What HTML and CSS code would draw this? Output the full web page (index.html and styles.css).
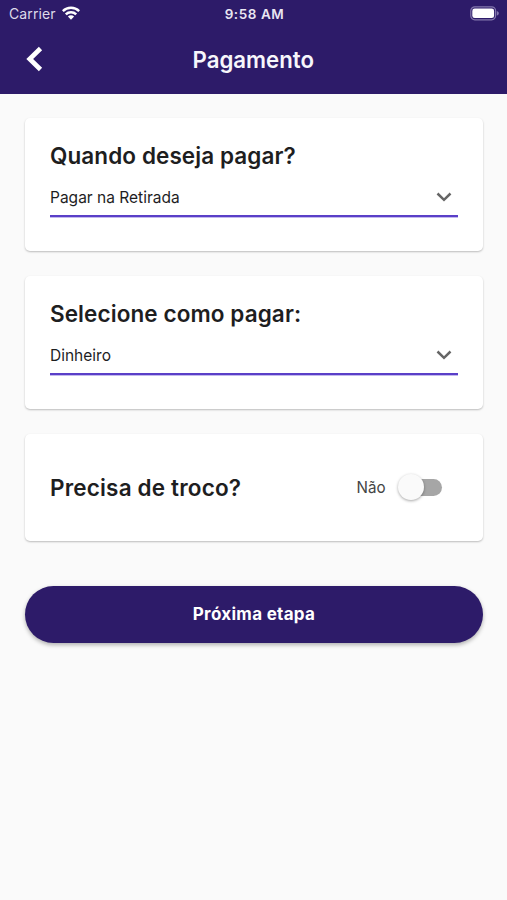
FILE: index.html
```html
<!DOCTYPE html>
<html lang="pt-BR">
<head>
<meta charset="utf-8">
<title>Pagamento</title>
<link rel="stylesheet" href="styles.css">
</head>
<body>
<header class="header">
  <div class="status">
    <div class="status-left"><span class="carrier">Carrier</span>
      <svg class="wifi" viewBox="0 0 18 14"><g fill="none" stroke="#fff" stroke-width="2.5"><path d="M.8 5.100a11.600 11.600 0 0 1 16.400 0"/><path d="M3.800 8.400a7.400 7.400 0 0 1 10.400 0"/></g><path fill="#fff" d="M9 13.700 5.900 10.600a4.400 4.400 0 0 1 6.200 0z"/></svg>
    </div>
    <span class="clock">9:58 AM</span>
    <svg class="battery" viewBox="0 0 31 15"><rect x="1.800" y=".8" width="24.800" height="13" rx="4" fill="none" stroke="#8478ad" stroke-width="1.200"/><rect x="3.300" y="2.500" width="21.800" height="9.600" rx="2.400" fill="#fff"/><path fill="#8478ad" d="M27.800 5c1.300.5 2 1.300 2 2.300s-.7 1.900-2 2.300z"/></svg>
  </div>
  <div class="bar">
    <svg class="back" viewBox="0 0 18 26"><path d="M15.500 2.500 4.700 13l10.800 10.500" fill="none" stroke="#fff" stroke-width="4.700"/></svg>
    <h1 class="title">Pagamento</h1>
    <span></span>
  </div>
</header>
<main class="content">
  <section class="card">
    <h2 class="heading">Quando deseja pagar?</h2>
    <div class="select"><span class="value">Pagar na Retirada</span>
      <svg class="chevron" viewBox="0 0 16 10"><path d="m1.500 1.500 6.500 6.300 6.500-6.300" fill="none" stroke="#666" stroke-width="2.500"/></svg></div>
  </section>
  <section class="card">
    <h2 class="heading">Selecione como pagar:</h2>
    <div class="select"><span class="value">Dinheiro</span>
      <svg class="chevron" viewBox="0 0 16 10"><path d="m1.500 1.500 6.500 6.300 6.500-6.300" fill="none" stroke="#666" stroke-width="2.500"/></svg></div>
  </section>
  <section class="card change">
    <h2 class="heading short">Precisa de troco?</h2>
    <div class="toggle"><span class="no">Não</span><span class="track"><span class="thumb"></span></span></div>
  </section>
  <button class="next">Próxima etapa</button>
</main>
</body>
</html>
```
FILE: styles.css
```css
* { box-sizing: border-box; }
body { margin: 0; min-height: 900px; background: #fafafa; color: #1e1e1f; font-family: Inter, "Liberation Sans", sans-serif; }
h1, h2 { margin: 0; }
span, h1, h2 { white-space: nowrap; }
svg { display: block; }
.header { height: 93.5px; background: #2d1b69; color: #fff; }
.status { height: 27px; display: grid; grid-template-columns: 1fr auto 1fr; align-items: center; padding: 0 7px 0 9px; }
.status-left { display: flex; align-items: center; gap: 6px; }
.carrier { font-size: 14px; color: #dedaea; letter-spacing: .1px; }
.wifi { width: 18px; height: 14px; margin-top: -1px; }
.clock { font-size: 13.5px; font-weight: 600; color: #e9e6f2; letter-spacing: .55px; }
.battery { width: 31px; height: 15px; justify-self: end; }
.bar { height: 65px; display: grid; grid-template-columns: 1fr auto 1fr; align-items: center; padding: 0 25px; }
.back { width: 18px; height: 26px; margin-top: -2px; }
.title { font-size: 23.5px; font-weight: 600; line-height: 30px; color: #f7f6fb; transform: scaleX(.945); }
.content { padding: 24.5px 24px 0 25px; display: flex; flex-direction: column; gap: 24.5px; }
.card { height: 133.3px; padding: 24px 25px; border-radius: 5px; background: #fff; box-shadow: 0 1px 2px rgba(0, 0, 0, .25); }
.heading { width: max-content; font-size: 22.5px; line-height: 28px; font-weight: 600; letter-spacing: .09px; }
.short { letter-spacing: .17px; margin-top: 1px; }
.select { height: 47px; border-bottom: 2px solid #5a3fc8; box-shadow: 0 1px 0 #c3b9ed; display: flex; align-items: center; justify-content: space-between; padding: 9px 6.5px 0 0; }
.value { font-size: 16.5px; transform: scaleX(.94); transform-origin: left center; }
.chevron { width: 16px; height: 10px; }
.change { height: 107.5px; display: flex; justify-content: space-between; align-items: center; padding-right: 41px; }
.toggle { display: flex; align-items: center; gap: 14.5px; }
.no { font-size: 16.5px; color: #444; transform: scaleX(.92); transform-origin: right center; }
.track { position: relative; width: 42px; height: 17px; border-radius: 9px; background: #a6a6a6; }
.thumb { position: absolute; left: -2.5px; top: -4.5px; width: 26px; height: 26px; border-radius: 50%; background: #fafafa; box-shadow: 0 1px 3px rgba(0, 0, 0, .35); }
.next { height: 57px; margin-top: 20px; border: 0; padding: 0; border-radius: 29px; background: #2d1b69; color: #fff; font: 700 17px Inter, sans-serif; letter-spacing: .3px; box-shadow: 0 2px 4px rgba(0, 0, 0, .3); }
```
